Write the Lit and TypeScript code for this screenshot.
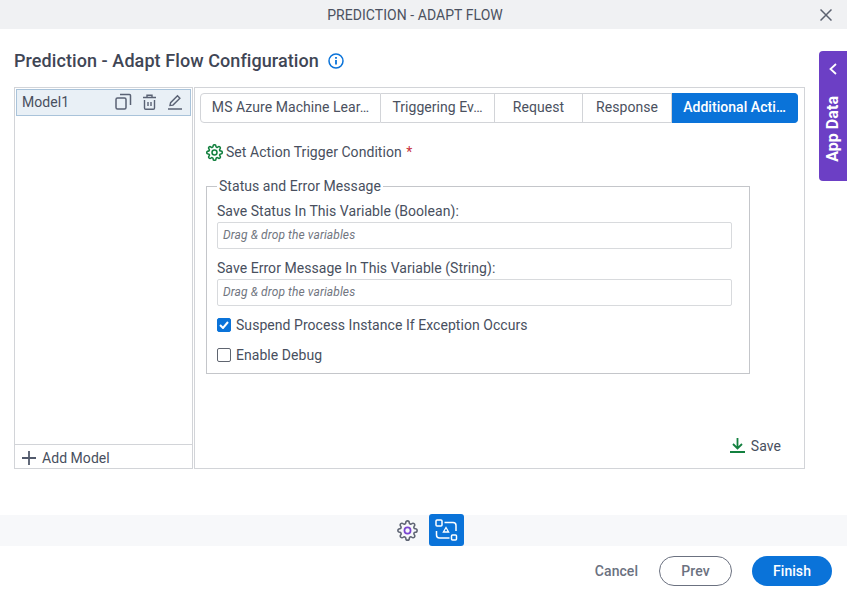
import { LitElement, html, css } from 'lit';
import { customElement } from 'lit/decorators.js';

const GEAR = 'M19.4 15a1.65 1.65 0 0 0 .33 1.82l.06.06a2 2 0 0 1 0 2.83 2 2 0 0 1-2.83 0l-.06-.06a1.65 1.65 0 0 0-1.82-.33 1.65 1.65 0 0 0-1 1.51V21a2 2 0 0 1-2 2 2 2 0 0 1-2-2v-.09A1.65 1.65 0 0 0 9 19.4a1.65 1.65 0 0 0-1.82.33l-.06.06a2 2 0 0 1-2.83 0 2 2 0 0 1 0-2.83l.06-.06a1.65 1.65 0 0 0 .33-1.82 1.65 1.65 0 0 0-1.51-1H3a2 2 0 0 1-2-2 2 2 0 0 1 2-2h.09A1.65 1.65 0 0 0 4.6 9a1.65 1.65 0 0 0-.33-1.82l-.06-.06a2 2 0 0 1 0-2.83 2 2 0 0 1 2.83 0l.06.06a1.65 1.65 0 0 0 1.82.33H9a1.65 1.65 0 0 0 1-1.51V3a2 2 0 0 1 2-2 2 2 0 0 1 2 2v.09a1.65 1.65 0 0 0 1 1.51 1.65 1.65 0 0 0 1.82-.33l.06-.06a2 2 0 0 1 2.83 0 2 2 0 0 1 0 2.83l-.06.06a1.65 1.65 0 0 0-.33 1.82V9a1.65 1.65 0 0 0 1.51 1H21a2 2 0 0 1 2 2 2 2 0 0 1-2 2h-.09a1.65 1.65 0 0 0-1.51 1z';

@customElement('app-root')
export class AppRoot extends LitElement {
  static styles = css`
    :host {
      display: block;
      position: relative;
      width: 847px;
      height: 592px;
      overflow: hidden;
      background: #fff;
      font-family: Roboto, 'Liberation Sans', sans-serif;
      color: #484f5e;
      font-size: 14px;
      letter-spacing: 0.05px;
    }
    svg { display: block; flex: none; }
    .topbar {
      height: 29px;
      background: #f0f1f3;
      display: flex;
      align-items: center;
      justify-content: center;
      position: relative;
      padding-right: 17px;
      box-sizing: border-box;
      font-size: 14px;
      color: #4b5160;
    }
    .close { position: absolute; right: 15px; top: 9px; }
    .title-row {
      height: 58px;
      padding-left: 14px;
      display: flex;
      align-items: center;
      gap: 8px;
      box-sizing: border-box;
      padding-top: 5px;
    }
    h1 { margin: 0; font-size: 18px; font-weight: 500; color: #3f4655; letter-spacing: 0.08px; }
    .body {
      display: flex;
      gap: 1px;
      padding-left: 14px;
      height: 382px;
    }
    .models {
      width: 179px;
      box-sizing: border-box;
      border: 1px solid #d2d4d8;
      display: flex;
      flex-direction: column;
      padding: 1px;
    }
    .model-row {
      height: 27px;
      box-sizing: border-box;
      background: #e9f0f6;
      border: 1px solid #a9c3da;
      display: flex;
      align-items: center;
      padding: 0 0 2px 5px;
      font-size: 14px;
    }
    .model-row span { flex: 1; }
    .model-icons { display: flex; gap: 10px; padding-right: 7px; align-items: center; }
    .add-model {
      margin: auto -1px -1px;
      height: 24px;
      box-sizing: border-box;
      border-top: 1px solid #d2d4d8;
      display: flex;
      align-items: center;
      padding: 2px 0 0 7px;
      gap: 6px;
    }
    .config {
      width: 611px;
      box-sizing: border-box;
      border: 1px solid #d2d4d8;
      padding: 5px 6px 0 5px;
      display: flex;
      flex-direction: column;
    }
    .tabs {
      display: flex;
      height: 30px;
      box-sizing: border-box;
    }
    .tab {
      box-sizing: border-box;
      border: 1px solid #d2d4d8;
      border-left: none;
      display: flex;
      align-items: center;
      justify-content: center;
      padding-bottom: 2px;
      color: #4b5160;
      white-space: nowrap;
    }
    .tab:first-child { border-left: 1px solid #d2d4d8; border-radius: 4px 0 0 4px; }
    .tab.active {
      background: #0a73d9;
      border-color: #0a73d9;
      color: #fff;
      font-weight: 500;
      border-radius: 0 4px 4px 0;
    }
    .trigger {
      display: flex;
      align-items: center;
      gap: 3px;
      margin: 20px 0 0 6px;
      height: 18px;
    }
    .req { color: #c8323c; margin-left: 1px; }
    fieldset {
      margin: 18px 0 0 6px;
      padding: 0 10px;
      width: 544px;
      height: 195px;
      box-sizing: border-box;
      border: 1px solid #c4c6ca;
    }
    legend { padding: 0 2px; margin-left: 0; line-height: 14px; font-size: 14px; }
    .field-label { line-height: 16px; margin-top: 10px; }
    .field-label.second { margin-top: 11px; }
    .drop {
      margin-top: 3px;
      width: 515px;
      height: 27px;
      box-sizing: border-box;
      border: 1px solid #d8dadd;
      border-radius: 2px;
      display: flex;
      align-items: center;
      padding: 0 0 2px 5px;
      font-size: 12px;
      font-style: italic;
      letter-spacing: 0.1px;
      color: #71767f;
    }
    .check {
      display: flex;
      align-items: center;
      gap: 5px;
      height: 18px;
    }
    .check.first { margin-top: 10px; }
    .check.last { margin-top: 12px; }
    .box {
      width: 14px;
      height: 14px;
      box-sizing: border-box;
      border-radius: 2px;
      border: 1px solid #5f6570;
      background: #fff;
    }
    .box.on {
      background: #0a73d9;
      border-color: #0a73d9;
      display: flex;
      align-items: center;
      justify-content: center;
    }
    .save-row {
      margin-top: auto;
      height: 36px;
      display: flex;
      justify-content: flex-end;
      align-items: flex-start;
      padding: 5px 17px 0 0;
      box-sizing: border-box;
      gap: 6px;
      line-height: 18px;
    }
    .strip {
      margin-top: 46px;
      height: 31px;
      background: #f7f8fa;
      display: flex;
      justify-content: center;
      align-items: center;
      gap: 11px;
      padding-left: 13px;
    }
    .flow-btn {
      width: 35px;
      height: 32px;
      margin-bottom: 1px;
      background: #0a73d9;
      border-radius: 3px;
      display: flex;
      align-items: center;
      justify-content: center;
    }
    .footer {
      height: 46px;
      display: flex;
      align-items: center;
      justify-content: flex-end;
      padding: 3px 15px 0 0;
      box-sizing: border-box;
    }
    .cancel { color: #6b7180; font-weight: 500; margin-right: 21px; }
    .btn {
      height: 30px;
      border-radius: 15px;
      box-sizing: border-box;
      display: flex;
      align-items: center;
      justify-content: center;
      font-weight: 500;
    }
    .prev { width: 73px; border: 1px solid #6b7180; color: #6b7180; margin-right: 20px; }
    .finish { width: 80px; background: #0a73d9; color: #fff; }
    .app-data {
      position: absolute;
      left: 819px;
      top: 51px;
      width: 28px;
      height: 130px;
      background: #6c3fc5;
      border-radius: 4px 0 0 4px;
      color: #fff;
      display: flex;
      flex-direction: column;
      align-items: center;
      padding-top: 12px;
      box-sizing: border-box;
      gap: 21px;
    }
    .app-data span {
      writing-mode: vertical-rl;
      transform: rotate(180deg);
      font-weight: 700;
      font-size: 16px;
      line-height: 28px;
    }
  `;

  render() {
    const tabs = [
      ['MS Azure Machine Lear…', 181],
      ['Triggering Ev…', 114],
      ['Request', 88],
      ['Response', 89],
    ] as const;
    return html`
      <div class="topbar">
        PREDICTION - ADAPT FLOW
        <svg class="close" width="12" height="12" viewBox="0 0 12 12" fill="none" stroke="#5c6270" stroke-width="1.5"><path d="M.5.5l11 11M11.500.5l-11 11"/></svg>
      </div>
      <div class="title-row">
        <h1>Prediction - Adapt Flow Configuration</h1>
        <svg width="18" height="18" viewBox="0 0 18 18" fill="none" stroke="#0a73d9" stroke-width="1.5"><circle cx="9" cy="9" r="7"/><path d="M9 8v4.6" stroke-width="1.8"/><path d="M9 5v1.8" stroke-width="1.8"/></svg>
      </div>
      <div class="body">
        <div class="models">
          <div class="model-row">
            <span>Model1</span>
            <div class="model-icons">
              <svg width="17" height="17" viewBox="0 0 17 17" fill="none" stroke="#5a6274" stroke-width="1.5"><rect x="1" y="5" width="10" height="11" rx="1.5"/><path d="M5 1.500h9.500a1 1 0 0 1 1 1V12"/></svg>
              <svg width="15" height="16" viewBox="0 0 15 16" fill="none" stroke="#5a6274" stroke-width="1.4"><path d="M1 3.500h13M5 3V1.200h5V3M2.500 6v8a1.200 1.200 0 0 0 1.200 1.200h7.600A1.200 1.200 0 0 0 12.500 14V6M6 8v4M9 8v4"/></svg>
              <svg width="16" height="16" viewBox="0 0 16 16" fill="none" stroke="#5a6274" stroke-width="1.4"><path d="M3 11.500l.6-2.800L10.500 1.800l2.400 2.400-6.900 6.900zM1 15h14"/></svg>
            </div>
          </div>
          <div class="add-model">
            <svg width="14" height="14" viewBox="0 0 14 14" stroke="#525a6c" stroke-width="1.8"><path d="M7 0v14M0 7h14"/></svg>
            Add Model
          </div>
        </div>
        <div class="config">
          <div class="tabs">
            ${tabs.map(([label, w]) => html`<div class="tab" style="width:${w}px">${label}</div>`)}
            <div class="tab active" style="width:126px">Additional Acti…</div>
          </div>
          <div class="trigger">
            <svg width="17" height="17" viewBox="0 0 24 24" fill="none" stroke="#13803f" stroke-width="2.2"><circle cx="12" cy="12" r="3.500"/><path d="${GEAR}"/></svg>
            <span>Set Action Trigger Condition<span class="req"> *</span></span>
          </div>
          <fieldset>
            <legend>Status and Error Message</legend>
            <div class="field-label">Save Status In This Variable (Boolean):</div>
            <div class="drop">Drag &amp; drop the variables</div>
            <div class="field-label second">Save Error Message In This Variable (String):</div>
            <div class="drop">Drag &amp; drop the variables</div>
            <div class="check first">
              <div class="box on"><svg width="10" height="8" viewBox="0 0 10 8" fill="none" stroke="#fff" stroke-width="2"><path d="M1 4l3 3 5-6"/></svg></div>
              Suspend Process Instance If Exception Occurs
            </div>
            <div class="check last"><div class="box"></div>Enable Debug</div>
          </fieldset>
          <div class="save-row">
            <svg width="15" height="15" viewBox="0 0 15 15" fill="none" stroke="#13803f" stroke-width="1.8" style="margin-top:1px"><path d="M7.500 0v10M3 6l4.500 4.500L12 6M0 14h15"/></svg>
            Save
          </div>
        </div>
      </div>
      <div class="strip">
        <svg width="21" height="21" viewBox="0 0 24 24" fill="none" stroke="#5f6574" stroke-width="1.8"><path d="${GEAR}"/><circle cx="12" cy="12" r="3.500" stroke="#7a45d0" stroke-width="2"/></svg>
        <div class="flow-btn">
          <svg width="24" height="24" viewBox="0 0 24 24" fill="none" stroke="#fff" stroke-width="1.5"><rect x="2" y="2" width="6" height="6" rx="1"/><rect x="17.500" y="17" width="5" height="5" rx="1"/><path d="M10.500 4.500H19a3 3 0 0 1 3 3V13M2.500 13v4a3 3 0 0 0 3 3H15.500"/><path d="M12 9.500l2.600 4.500H9.400z" stroke-width="1.3"/></svg>
        </div>
      </div>
      <div class="footer">
        <span class="cancel">Cancel</span>
        <div class="btn prev">Prev</div>
        <div class="btn finish">Finish</div>
      </div>
      <div class="app-data">
        <svg width="10" height="12" viewBox="0 0 10 12" fill="none" stroke="#fff" stroke-width="1.8"><path d="M8 1L2.500 6 8 11"/></svg>
        <span>App Data</span>
      </div>
    `;
  }
}
